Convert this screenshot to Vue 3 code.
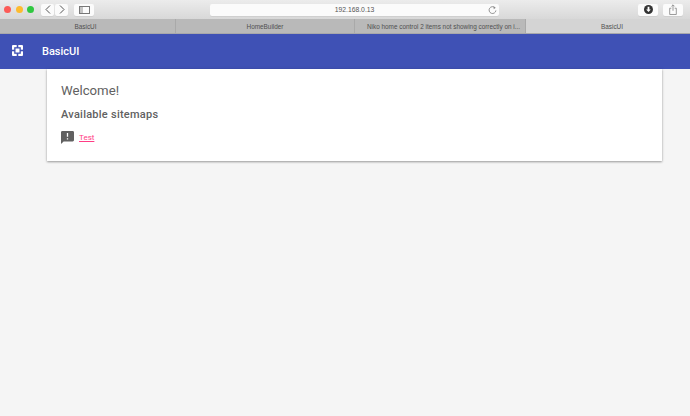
<script setup>
const tabs = [
  { label: 'BasicUI', cls: 'w1' },
  { label: 'HomeBuilder', cls: 'w2' },
  { label: 'Niko home control 2 items not showing correctly on i...', cls: 'w3' },
  { label: 'BasicUI', cls: 'w4 active' }
]
</script>

<template>
  <div class="page">
    <div class="toolbar">
      <div class="lights">
        <span class="dot red"></span>
        <span class="dot yellow"></span>
        <span class="dot green"></span>
      </div>
      <div class="navgroup">
        <button class="tb nav">
          <svg width="6" height="9" viewBox="0 0 6 9"><path d="M5 .5 1 4.500l4 4" fill="none" stroke="#555" stroke-width="1"/></svg>
        </button>
        <button class="tb nav">
          <svg width="6" height="9" viewBox="0 0 6 9"><path d="M1 .5l4 4-4 4" fill="none" stroke="#555" stroke-width="1"/></svg>
        </button>
      </div>
      <button class="tb side">
        <svg width="11" height="8" viewBox="0 0 11 8"><rect x=".5" y=".5" width="10" height="7" fill="none" stroke="#777"/><rect x="1" y="1" width="3" height="6" fill="#c4c4c4"/></svg>
      </button>
      <div class="address">
        <span class="url">192.168.0.13</span>
        <svg class="reload" width="9" height="10" viewBox="0 0 10 11"><path d="M7.800 3A3.800 3.800 0 1 0 8.800 6" fill="none" stroke="#888" stroke-width="1"/><path d="M6 1.200 8.600 3 6.400 4.600z" fill="#888"/></svg>
      </div>
      <button class="tb act">
        <svg width="9" height="9" viewBox="0 0 10 10"><circle cx="5" cy="5" r="5" fill="#333"/><path d="M4 2h2v3h1.600L5 7.800 2.400 5H4z" fill="#fff"/></svg>
      </button>
      <button class="tb act">
        <svg width="8" height="11" viewBox="0 0 9 13"><path d="M2.500 5H.6v7.400h7.800V5H6.500" fill="none" stroke="#888"/><path d="M4.500 8V1M2.700 2.800 4.500 1l1.800 1.800" fill="none" stroke="#888"/></svg>
      </button>
    </div>
    <div class="tabs">
      <div v-for="t in tabs" :key="t.cls" class="tab" :class="t.cls">{{ t.label }}</div>
    </div>
    <header class="appbar">
      <svg class="logo" width="11" height="11" viewBox="0 0 11 11">
        <rect width="11" height="11" rx="1" fill="#fff"/>
        <rect x="2.200" y="2.200" width="6.600" height="6.600" fill="#3f51b5"/>
        <rect x="4.700" y="0" width="1.600" height="11" fill="#3f51b5"/>
        <rect x="0" y="4.700" width="11" height="1.600" fill="#3f51b5"/>
        <rect x="3.500" y="3.500" width="4" height="4" fill="#fff"/>
      </svg>
      <span class="title">BasicUI</span>
    </header>
    <main class="content">
      <section class="card">
        <h1>Welcome!</h1>
        <h2>Available sitemaps</h2>
        <div class="row">
          <svg width="13" height="13" viewBox="2 2 20 20"><path fill="#616161" d="M20 2H4c-1.100 0-2 .9-2 2v18l4-4h14c1.100 0 2-.9 2-2V4c0-1.100-.9-2-2-2zm-7 9h-2V5h2v6zm0 4h-2v-2h2v2z"/></svg>
          <a class="link">Test</a>
        </div>
      </section>
    </main>
  </div>
</template>

<style>
html, body { margin: 0; background: #f5f5f5; }
</style>

<style scoped>
.page {
  width: 690px;
  height: 416px;
  overflow: hidden;
  background: #f5f5f5;
  font-family: Roboto, "Liberation Sans", sans-serif;
  display: flex;
  flex-direction: column;
}
.toolbar {
  height: 19px;
  box-sizing: border-box;
  display: flex;
  align-items: center;
  background: linear-gradient(#ececec, #d8d8d8);
  padding-left: 4px;
  flex: none;
}
.lights { display: flex; gap: 4.500px; width: 37px; flex: none; }
.dot { width: 7px; height: 7px; border-radius: 50%; }
.red { background: #fc5b57; }
.yellow { background: #fdbb2e; }
.green { background: #2fc840; }
.navgroup { display: flex; gap: 1px; margin-right: 6px; }
.tb {
  border: 0;
  padding: 0;
  height: 12px;
  background: #fbfbfb;
  border-radius: 2px;
  display: flex;
  align-items: center;
  justify-content: center;
  box-shadow: 0 1px 0 #cfcfcf;
}
.nav { width: 13px; }
.side { width: 20px; }
.address {
  width: 289px;
  height: 12px;
  margin-left: 116px;
  background: #fbfbfb;
  border-radius: 2px;
  box-shadow: 0 1px 0 #cfcfcf;
  position: relative;
  display: flex;
  align-items: center;
  justify-content: center;
  flex: none;
  font-family: "Liberation Sans", sans-serif;
  font-size: 6.800px;
  color: #555;
}
.reload { position: absolute; right: 2px; top: 1px; }
.act { width: 20px; margin-left: 5px; }
.address + .act { margin-left: 139px; }
.tabs {
  height: 14px;
  display: flex;
  flex: none;
  background: #b9b9b9;
  font-family: "Liberation Sans", sans-serif;
  font-size: 6.400px;
  color: #505050;
}
.tab {
  box-sizing: border-box;
  display: flex;
  align-items: center;
  justify-content: center;
  border-right: 1px solid #a9a9a9;
  white-space: nowrap;
}
.w1 { width: 176px; padding-right: 4px; }
.w2 { width: 179px; }
.w3 { width: 171px; padding-left: 7px; }
.w4 { flex: 1; border-right: 0; padding-left: 8px; }
.active { background: #d4d4d4; }
.appbar {
  height: 36px;
  flex: none;
  background: #3f51b5;
  color: #fff;
  display: flex;
  align-items: center;
  padding-left: 12px;
  border-top: 1px solid #a8a8ab;
  box-sizing: border-box;
}
.logo { margin-top: -3px; }
.title {
  margin-left: 19px;
  font-size: 11px;
  font-weight: 500;
}
.content {
  flex: 1;
  padding: 0 28px 0 47px;
}
.card {
  background: #fff;
  height: 92px;
  box-sizing: border-box;
  padding: 14px 14px 0;
  box-shadow: 0 1px 2px rgba(0, 0, 0, 0.35), 0 0 4px rgba(0, 0, 0, 0.08);
  color: #616161;
}
h1 {
  margin: 0;
  font-size: 13.200px;
  line-height: 16px;
  font-weight: 400;
}
h2 {
  margin: 9px 0 0;
  font-size: 11px;
  line-height: 14px;
  font-weight: 500;
  letter-spacing: 0.250px;
}
.row {
  margin-top: 8px;
  display: flex;
  align-items: center;
  height: 14px;
}
.link {
  margin-left: 5px;
  margin-top: 1px;
  font-size: 8px;
  color: #ff3d85;
  text-decoration: underline;
}
</style>
